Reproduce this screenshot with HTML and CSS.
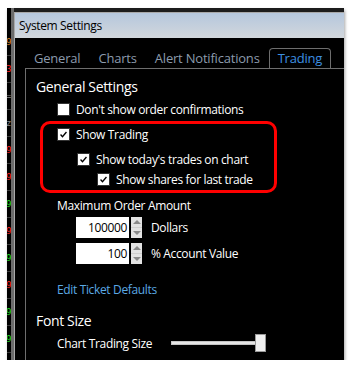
FILE: index.html
```html
<!DOCTYPE html>
<html lang="en">
<head>
    <meta charset="UTF-8">
    <title>System Settings</title>
    <link rel="stylesheet" href="styles.css">
</head>
<body>
    <div class="frame">
        <div class="ticker">
            <div class="tick orange">9</div>
            <div class="tick red">3</div>
            <div class="tick gray">=</div>
            <div class="tick gray">z</div>
            <div class="tick red">9</div>
            <div class="tick red">9</div>
            <div class="tick green">9</div>
            <div class="tick red">9</div>
            <div class="tick green">9</div>
            <div class="tick red">9</div>
            <div class="tick green">9</div>
            <div class="tick green">9</div>
        </div>
        <div class="ticker-edge"></div>
        <div class="window">
            <div class="titlebar">System Settings</div>
            <div class="window-body">
                <div class="tabs">
                    <div class="tab">General</div>
                    <div class="tab">Charts</div>
                    <div class="tab">Alert Notifications</div>
                    <div class="tab active">Trading</div>
                </div>
                <div class="panel">
                    <div class="section-title">General Settings</div>
                    <div class="row indent1">
                        <span class="check"></span>
                        <span>Don't show order confirmations</span>
                    </div>

                    <div class="highlight">
                        <div class="row">
                            <span class="check checked">
                                <svg viewBox="0 0 13 13" width="13" height="13"><path d="M3 6.5 L5.3 9 L10 3.5" fill="none" stroke="#000" stroke-width="1.6"/></svg>
                            </span>
                            <span>Show Trading</span>
                        </div>
                        <div class="row indent-sub">
                            <span class="check checked">
                                <svg viewBox="0 0 13 13" width="13" height="13"><path d="M3 6.5 L5.3 9 L10 3.5" fill="none" stroke="#000" stroke-width="1.6"/></svg>
                            </span>
                            <span>Show today's trades on chart</span>
                        </div>
                        <div class="row indent-sub2">
                            <span class="check checked">
                                <svg viewBox="0 0 13 13" width="13" height="13"><path d="M3 6.5 L5.3 9 L10 3.5" fill="none" stroke="#000" stroke-width="1.6"/></svg>
                            </span>
                            <span>Show shares for last trade</span>
                        </div>
                    </div>

                    <div class="row indent1 max-label">Maximum Order Amount</div>
                    <div class="spin-row first">
                        <div class="num">100000</div>
                        <div class="spinner"><span class="up"></span><span class="down"></span></div>
                        <span class="spin-label">Dollars</span>
                    </div>
                    <div class="spin-row">
                        <div class="num">100</div>
                        <div class="spinner"><span class="up"></span><span class="down"></span></div>
                        <span class="spin-label">% Account Value</span>
                    </div>

                    <div class="row indent1 link-row"><a class="link">Edit Ticket Defaults</a></div>

                    <div class="section-title font-title">Font Size</div>
                    <div class="row indent1 slider-row">
                        <span class="slider-label">Chart Trading Size</span>
                        <div class="slider">
                            <div class="track"></div>
                            <div class="thumb"></div>
                        </div>
                    </div>
                </div>
            </div>
        </div>
    </div>
</body>
</html>
```

FILE: styles.css
```css
body {
    margin: 0;
    background: #fff;
    font-family: "Open Sans", "Noto Sans", sans-serif;
    font-size: 12px;
    letter-spacing: -0.35px;
    color: #fff;
}
.frame {
    margin: 8px 0 0 7px;
    width: 337px;
    height: 352px;
    background: #1c1c1c;
    display: flex;
    overflow: hidden;
    box-shadow: 1px 2px 3px rgba(0, 0, 0, 0.35);
}
.ticker {
    width: 4px;
    background: #000;
    padding-top: 21px;
    overflow: hidden;
    flex-shrink: 0;
}
.tick {
    height: 26px;
    border-bottom: 1px solid #3a3a3a;
    font-family: "DejaVu Sans Mono", monospace;
    font-size: 9px;
    line-height: 27px;
    text-indent: -1px;
}
.red { color: #ff2020; }
.green { color: #22dd22; }
.orange { color: #d9822b; }
.gray { color: #888; }
.ticker-edge {
    width: 3px;
    background: #6b6b6b;
    flex-shrink: 0;
}
.window {
    flex: 1;
    margin-top: 4px;
    border-left: 1px solid #a8a8a8;
    border-top: 1px solid #a8a8a8;
    display: flex;
    flex-direction: column;
}
.titlebar {
    height: 25px;
    line-height: 25px;
    padding-left: 4px;
    color: #000;
    background: linear-gradient(#b5c7dd, #d2d7dc);
    white-space: nowrap;
}
.window-body {
    flex: 1;
    background: #000;
    padding-left: 10px;
}
.tabs {
    display: flex;
    height: 30px;
    align-items: flex-end;
    white-space: nowrap;
}
.tab {
    padding: 0 8px;
    height: 19px;
    line-height: 19px;
    color: #8c9bad;
    font-size: 13px;
    letter-spacing: -0.2px;
    border: 1px solid transparent;
    border-bottom: none;
}
.tab.active {
    color: #3d8fe0;
    border-color: #6e6e6e;
    border-radius: 4px 4px 0 0;
}
.panel {
    border-top: 1px solid #6e6e6e;
    border-left: 1px solid #6e6e6e;
    padding-left: 10px;
    height: 300px;
}
.section-title {
    margin-top: 6px;
    height: 24px;
    line-height: 24px;
    font-size: 14px;
}
.row {
    display: flex;
    align-items: center;
    height: 20px;
    gap: 6px;
    white-space: nowrap;
}
.indent1 {
    padding-left: 21px;
}
.check {
    width: 13px;
    height: 13px;
    box-sizing: border-box;
    background: #fff;
    border: 1px solid #333;
    display: inline-flex;
    align-items: center;
    justify-content: center;
}
.check svg {
    display: block;
}
.highlight {
    margin: 2px 0 0 4px;
    width: 217px;
    border: 3px solid #ff0000;
    border-radius: 10px;
    padding: 0 0 1px 14px;
}
.indent-sub {
    padding-left: 20px;
    margin-top: 5px;
}
.indent-sub2 {
    padding-left: 40px;
}
.max-label {
    margin-top: 2px;
}
.spin-row {
    display: flex;
    align-items: center;
    height: 21px;
    margin-top: 5px;
    padding-left: 40px;
    white-space: nowrap;
}
.spin-row.first {
    margin-top: 2px;
}
.num {
    width: 53px;
    height: 21px;
    line-height: 21px;
    background: #fff;
    color: #000;
    text-align: right;
    padding-right: 2px;
    box-sizing: border-box;
}
.spinner {
    width: 11px;
    height: 21px;
    margin-left: 2px;
    background: #e3e3e3;
    display: flex;
    flex-direction: column;
}
.spinner span {
    flex: 1;
    display: flex;
    align-items: center;
    justify-content: center;
}
.spinner .up::before {
    content: "";
    border: 4px solid transparent;
    border-top: none;
    border-bottom: 4px solid #8a8a8a;
}
.spinner .down {
    border-top: 1px solid #cfcfcf;
}
.spinner .down::before {
    content: "";
    border: 4px solid transparent;
    border-bottom: none;
    border-top: 4px solid #8a8a8a;
}
.spin-label {
    margin-left: 9px;
}
.link-row {
    margin-top: 15px;
}
.link {
    color: #5ba9e4;
}
.font-title {
    margin-top: 11px;
    height: 22px;
    line-height: 22px;
}
.slider-row {
    margin-top: 1px;
    gap: 0;
}
.slider-label {
    width: 114px;
}
.slider {
    position: relative;
    width: 95px;
    height: 20px;
}
.track {
    position: absolute;
    left: 0;
    top: 8px;
    width: 85px;
    height: 4px;
    background: #e6e6e6;
    border: 1px solid #c4c4c4;
    box-sizing: border-box;
}
.thumb {
    position: absolute;
    left: 84px;
    top: 1px;
    width: 11px;
    height: 18px;
    background: #f0f0f0;
    border: 1px solid #9a9a9a;
    box-sizing: border-box;
}
```
